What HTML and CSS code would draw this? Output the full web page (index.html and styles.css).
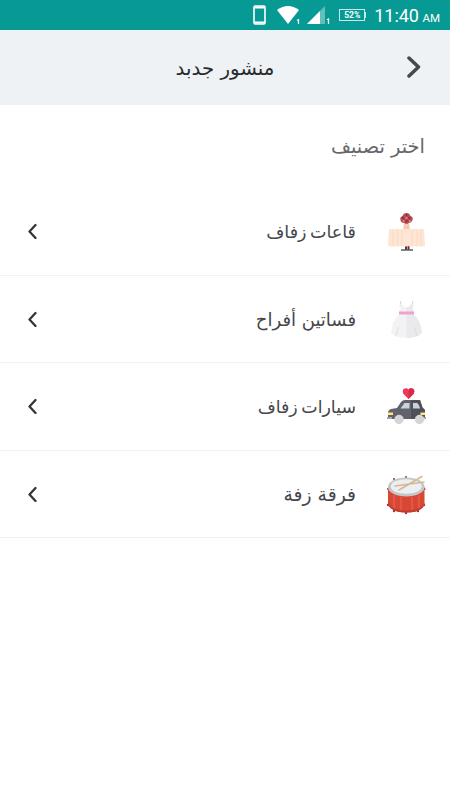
FILE: index.html
```html
<!DOCTYPE html>
<html lang="ar" dir="rtl">
<head>
  <meta charset="UTF-8" />
  <meta name="viewport" content="width=device-width, initial-scale=1.0"/>
  <title>منشور جدبد</title>
  <link rel="stylesheet" href="styles.css">
</head>
<body>
  <div class="status-bar" dir="ltr">
    <svg class="phone" width="13" height="20" viewBox="0 0 13 20">
      <rect x="1" y="1" width="11" height="18" rx="1.2" fill="none" stroke="#fff" stroke-width="1.6"/>
      <path d="M1 2.500h11M1 17.500h11" stroke="#fff" stroke-width="2"/>
    </svg>
    <svg class="wifi" width="24" height="18" viewBox="0 0 24 18">
      <path d="M0 4Q11-4 22 4L11 18Z" fill="#fff"/>
      <path d="M20 14.500l1.500-.8V18" fill="none" stroke="#fff" stroke-width="1.200"/>
    </svg>
    <svg class="signal" width="24" height="18" viewBox="0 0 24 18">
      <path d="M0 18L18 0V18Z" fill="#62bfba"/>
      <path d="M0 18L13 5V18Z" fill="#fff"/>
      <path d="M20 13.800l1.500-.8V18" fill="none" stroke="#fff" stroke-width="1.300"/>
    </svg>
    <span class="battery">52%</span>
    <span class="clock">11:40 <small>AM</small></span>
  </div>

  <header class="header">
    <svg class="back" width="16" height="24" viewBox="0 0 16 24">
      <path d="M3 2L12.500 11L3 20"/>
    </svg>
    <h1>منشور جدبد</h1>
  </header>

  <main>
    <h2>اختر تصنيف</h2>
    <ul class="categories">
      <li>
        <svg class="icon" width="40" height="40" viewBox="0 0 40 40">
          <path d="M19 33h2v4h-2zM21.500 33h2v4h-2z" fill="#6b3038"/>
          <path d="M15 37H27" stroke="#566068" stroke-width="1.500"/>
          <path d="M18 10h5l1 8h-7z" fill="#f8c9ae"/>
          <path d="M3 16h35l1 17q-3 1-5 0-3 1-6 0-3 1-6 0-3 1-6 0-3 1-5 0-4 1-9 0Z" fill="#ffe5d4"/>
          <path d="M7 17v16M11.500 17v16M16 17v16M26 17v16M31 17v16M35 17v16" stroke="#f8dac8"/>
          <path d="M20.500 0q3 0 4 3 3 1 2 4-1 3-4 3-2 2-4 0-4 0-4-3-1-3 2-4 1-3 4-3Z" fill="#b94c50"/>
          <g fill="#8e3640"><circle cx="20.500" cy="2" r="1.100"/><circle cx="17" cy="5" r="1.200"/><circle cx="23.500" cy="5" r="1.200"/><circle cx="20.500" cy="8" r="1.200"/></g>
          <g fill="#e28785"><circle cx="20.500" cy="5" r="1.100"/><circle cx="17.500" cy="8" r="1"/><circle cx="24" cy="8" r="1"/></g>
        </svg>
        <span class="label halls">قاعات زفاف</span>
        <svg class="arrow" width="12" height="16" viewBox="0 0 12 16"><path d="M9.500 2L3.500 8.500l6 6.500"/></svg>
      </li>
      <li>
        <svg class="icon" width="40" height="40" viewBox="0 0 40 40">
          <path d="M14.500 7V1M26.500 7V1" stroke="#d9dadd" stroke-width="1.300"/>
          <path d="M14 4q3 0 4 2.500 2.500 1 5 0Q24 4 27 4l-.5 4q0 2 1.500 3v4q7 6 8 17.500-3 5-15.500 5.500Q8 37.500 5 32.500 6 21 13 15v-4q1.500-1 1.500-3Z" fill="#f3f3f5"/>
          <path d="M20.500 7q2 0 2.500-.5Q24 4 27 4l-.5 4q0 2 1.500 3v4q7 6 8 17.500-3 5-15.500 5.500Z" fill="#eaeaed"/>
          <path d="M13 11.500h15v3H13z" fill="#f0a0d2"/>
          <path d="M12.500 27l-2.500 9M28.500 27l2.500 9" stroke="#dcdde1"/>
        </svg>
        <span class="label">فساتين أفراح</span>
        <svg class="arrow" width="12" height="16" viewBox="0 0 12 16"><path d="M9.500 2L3.500 8.500l6 6.500"/></svg>
      </li>
      <li>
        <svg class="icon" width="40" height="40" viewBox="0 0 40 40">
          <path d="M22.500 11l-5-5q-2-4 1-5.500 3-.7 4 1.200 1-1.900 4-1.200 3 1.500 1 5.500Z" fill="#f2385a"/>
          <path d="M22.500 1.700q1-1.900 4-1.200 3 1.500 1 5.500l-5 5Z" fill="#da2a4c"/>
          <path d="M2 31V25q0-3 3-4l6-1 4-6q1.500-2 4-2h15l2.500 7.500 2.500 2.500v9H2Z" fill="#62626b"/>
          <path d="M25 12h9l2.500 7.500 2.500 2.500v9H25Z" fill="#505059"/>
          <path d="M14.500 20.500l4-5.500h5v5.500ZM27 15h4q2 1 3 5.500h-7Z" fill="#c9d3da"/>
          <path d="M2 24.500h5v2.500H2zM34.500 24.500h4.500v2.500h-4.500z" fill="#ffe484"/>
          <path d="M1 30h5M37 30h3" stroke="#a4a4aa" stroke-width="2"/>
          <circle cx="13" cy="31.500" r="4.700" fill="#d4d5d7"/>
          <circle cx="33.500" cy="31.500" r="4.700" fill="#d4d5d7"/>
        </svg>
        <span class="label cars">سيارات زفاف</span>
        <svg class="arrow" width="12" height="16" viewBox="0 0 12 16"><path d="M9.500 2L3.500 8.500l6 6.500"/></svg>
      </li>
      <li>
        <svg class="icon" width="40" height="40" viewBox="0 0 40 40">
          <g fill="#8b3537"><circle cx="2" cy="14" r="1"/><circle cx="8" cy="36" r="1.200"/><circle cx="20" cy="38" r="1.200"/><circle cx="32" cy="36" r="1.200"/><circle cx="38.500" cy="14" r="1"/><circle cx="2" cy="30" r="1.200"/><circle cx="38" cy="30" r="1.200"/><circle cx="8" cy="4" r="1"/><circle cx="20" cy="2" r="1"/></g>
          <path d="M2 12h36.500v18q-4 7.500-18 7.500T2 30Z" fill="#d84634"/>
          <path d="M8 20v15M15 22v15M26 22v15M33 20v15" stroke="#e76a59"/>
          <path d="M2 28q4 7.500 18.500 7.500T38.500 28v2q-4 7.500-18 7.500T2 30Z" fill="#c23a2e"/>
          <ellipse cx="20.300" cy="12" rx="18.300" ry="9.500" fill="#c3c6c8"/>
          <ellipse cx="20.300" cy="11.500" rx="15.500" ry="7.300" fill="#eceeef"/>
          <path d="M9 11L38 7M13 15L36 1.500" stroke="#d1b997" stroke-width="1.500" stroke-linecap="round"/>
        </svg>
        <span class="label band">فرقة زفة</span>
        <svg class="arrow" width="12" height="16" viewBox="0 0 12 16"><path d="M9.500 2L3.500 8.500l6 6.500"/></svg>
      </li>
    </ul>
  </main>
</body>
</html>
```
FILE: styles.css
```css
* {
  margin: 0;
  padding: 0;
  box-sizing: border-box;
}

body {
  min-height: 100vh;
  background: #fff;
  color: #46464b;
  font-family: "DejaVu Sans", sans-serif;
}

.status-bar {
  display: flex;
  align-items: center;
  justify-content: flex-end;
  height: 30px;
  padding-right: 10px;
  background: #079a95;
  color: #fff;
  font-family: Roboto, sans-serif;
}

.wifi {
  margin-left: 11px;
}

.signal {
  margin-left: 6px;
}

.battery {
  position: relative;
  width: 26px;
  height: 12px;
  margin: 0 9px 0 8px;
  border: 1px solid #c7e9e7;
  font-size: 8.5px;
  font-weight: bold;
  line-height: 10px;
  text-align: center;
}

.battery::after {
  content: "";
  position: absolute;
  top: 2px;
  right: -2px;
  width: 1px;
  height: 6px;
  background: #c7e9e7;
}

.clock {
  padding-top: 3px;
  font-size: 18px;
  line-height: 27px;
  white-space: nowrap;
}

.clock small {
  margin-left: -1px;
  font-size: 11.5px;
}

.header {
  display: grid;
  grid-template-columns: 46px 1fr 46px;
  align-items: center;
  height: 75px;
  background: #eef2f5;
}

.back {
  margin-right: 28px;
}

.back path,
.arrow path {
  fill: none;
  stroke: #45484c;
  stroke-width: 3.5;
  stroke-linecap: round;
  stroke-linejoin: round;
}

h1,
h2 {
  font-weight: normal;
}

h1 {
  padding-top: 2px;
  color: #292b2e;
  font-size: 19.8px;
  text-align: center;
}

h2 {
  height: 83px;
  padding: 0 25px;
  color: #68686b;
  font-size: 19.4px;
  line-height: 84px;
}

.categories {
  list-style: none;
}

.categories li {
  display: flex;
  align-items: center;
  height: 87.5px;
  padding: 0 24px 0 26px;
  border-bottom: 1px solid #f2f2f2;
}

.icon {
  margin-top: 3px;
}

.label {
  flex: 1;
  margin-right: 30px;
  padding-top: 2px;
  font-size: 18px;
}

.halls {
  font-size: 17.5px;
  word-spacing: -2px;
}

.cars {
  font-size: 17.4px;
  word-spacing: -2px;
}

.band {
  font-size: 18.8px;
}

.arrow path {
  stroke: #353539;
  stroke-width: 2.3;
}
```
